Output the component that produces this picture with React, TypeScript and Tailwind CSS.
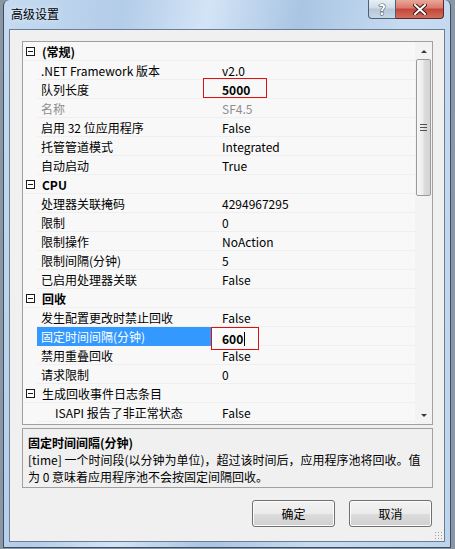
import React from "react";

type Row =
  | { kind: "cat"; name: string; bold?: boolean }
  | { kind: "prop"; name: string; value: string; disabled?: boolean; indent?: boolean; selected?: boolean; boldValue?: boolean };

const rows: Row[] = [
  { kind: "cat", name: "(常规)", bold: true },
  { kind: "prop", name: ".NET Framework 版本", value: "v2.0" },
  { kind: "prop", name: "队列长度", value: "5000", boldValue: true },
  { kind: "prop", name: "名称", value: "SF4.5", disabled: true },
  { kind: "prop", name: "启用 32 位应用程序", value: "False" },
  { kind: "prop", name: "托管管道模式", value: "Integrated" },
  { kind: "prop", name: "自动启动", value: "True" },
  { kind: "cat", name: "CPU", bold: true },
  { kind: "prop", name: "处理器关联掩码", value: "4294967295" },
  { kind: "prop", name: "限制", value: "0" },
  { kind: "prop", name: "限制操作", value: "NoAction" },
  { kind: "prop", name: "限制间隔(分钟)", value: "5" },
  { kind: "prop", name: "已启用处理器关联", value: "False" },
  { kind: "cat", name: "回收", bold: true },
  { kind: "prop", name: "发生配置更改时禁止回收", value: "False" },
  { kind: "prop", name: "固定时间间隔(分钟)", value: "600", selected: true, boldValue: true },
  { kind: "prop", name: "禁用重叠回收", value: "False" },
  { kind: "prop", name: "请求限制", value: "0" },
  { kind: "cat", name: "生成回收事件日志条目" },
  { kind: "prop", name: "ISAPI 报告了非正常状态", value: "False", indent: true },
];

function Minus() {
  return (
    <div className="w-[9px] h-[9px] border border-[#1a1a1a] bg-white flex items-center justify-center">
      <div className="w-[5px] h-px bg-[#1a1a1a]" />
    </div>
  );
}

function GridRow({ r }: { r: Row }) {
  if (r.kind === "cat") {
    return (
      <div className="flex h-[19px] items-center border-b border-[#f0f0f0]">
        <div className="w-[14px] pl-[3px] flex items-center">
          <Minus />
        </div>
        <div className={`pl-[5px] pt-[1px] whitespace-nowrap text-black ${r.bold ? "font-bold" : ""}`}>{r.name}</div>
      </div>
    );
  }
  return (
    <div className="flex h-[19px] items-stretch">
      <div className="w-[14px]" />
      <div
        className={`w-[174px] flex items-center pt-[1px] whitespace-nowrap border-b ${
          r.selected ? "bg-[#3399ff] text-white border-[#3399ff]" : "border-[#efefef]"
        } ${r.indent ? "pl-[18px]" : "pl-[4px]"} ${r.disabled ? "text-[#8e8e8e]" : r.selected ? "" : "text-black"}`}
      >
        {r.name}
      </div>
      <div className="flex-1 flex items-center pt-[1px] border-b border-[#efefef] relative">
        {r.selected ? (
          <div className="absolute left-0 top-0 w-[48px] h-[23px] border border-[#e01010] bg-[#fbfbfb] flex items-center pl-[10px] pt-[1px]">
            <span className="font-bold text-black">{r.value}</span>
            <span className="w-px h-[14px] bg-black ml-[1px]" />
          </div>
        ) : (
          <span className={`pl-[11px] ${r.disabled ? "text-[#8e8e8e]" : "text-black"} ${r.boldValue ? "font-bold" : ""}`}>
            {r.value}
          </span>
        )}
        {r.name === "队列长度" && (
          <div className="absolute left-[-8px] top-[-2px] w-[64px] h-[20px] border border-[#e01010]" />
        )}
      </div>
    </div>
  );
}

function Scrollbar() {
  return (
    <div className="w-[17px] bg-[#f3f3f3] flex flex-col items-center">
      <div className="h-[17px] flex items-center justify-center">
        <div className="w-0 h-0 border-l-[3px] border-r-[3px] border-b-[3px] border-l-transparent border-r-transparent border-b-[#3a3a3a] mt-[1px]" />
      </div>
      <div className="w-[15px] h-[137px] rounded-[2px] border border-[#9a9a9a] bg-[linear-gradient(90deg,#f6f6f6_0%,#ececec_45%,#dcdcdc_55%,#d4d4d4_100%)] flex flex-col items-center justify-center gap-[2px]">
        <div className="w-[7px] h-px bg-[#505050]" />
        <div className="w-[7px] h-px bg-[#505050]" />
        <div className="w-[7px] h-px bg-[#505050]" />
      </div>
      <div className="flex-1" />
      <div className="h-[17px] flex items-center justify-center">
        <div className="w-0 h-0 border-l-[3px] border-r-[3px] border-t-[3px] border-l-transparent border-r-transparent border-t-[#3a3a3a]" />
      </div>
    </div>
  );
}

function Button({ label }: { label: string }) {
  return (
    <div className="w-[83px] h-[27px] rounded-[3px] border border-[#707070] bg-[linear-gradient(180deg,#f2f2f2_0%,#ebebeb_50%,#dddddd_51%,#cfcfcf_100%)] shadow-[inset_0_0_0_1px_#fcfcfc] flex items-center justify-center pt-[1px] text-black">
      {label}
    </div>
  );
}

export default function App() {
  return (
    <div className="w-[455px] h-[549px] bg-[#8b96a3] font-['Noto_Sans_CJK_SC','Microsoft_YaHei',sans-serif] text-[12px] leading-none overflow-hidden">
      <div className="ml-[3px] w-[448px] h-[548px] rounded-t-[6px] border border-t-0 border-[#3c4d61] bg-[linear-gradient(100deg,#c6dbf1_0%,#b3cce8_22%,#d3e4f6_38%,#a9c5e3_55%,#c8dcf1_75%,#bcd4ed_100%)] flex flex-col px-[5px] pb-[5px] relative">
        {/* title bar */}
        <div className="h-[29px] flex items-start">
          <div className="pt-[8px] pl-[2px] text-[12px] text-black [text-shadow:0_0_6px_#e8f2fc]">高级设置</div>
          <div className="flex-1" />
          <div className="flex mr-[1px]">
            <div className="w-[28px] h-[19px] rounded-bl-[4px] border border-t-0 border-[#4f5f72] bg-[linear-gradient(180deg,#e6eef6_0%,#cfdbe8_45%,#b4c6d9_50%,#c8d7e6_100%)] flex items-center justify-center">
              <span className="text-white font-bold text-[14px] [-webkit-text-stroke:1px_#3a4450] [paint-order:stroke_fill]">?</span>
            </div>
            <div className="w-[48px] h-[19px] rounded-br-[4px] border border-t-0 border-l-0 border-[#5a2a2a] bg-[linear-gradient(180deg,#e9a899_0%,#d9786a_45%,#c4453a_50%,#d0705a_100%)] flex items-center justify-center">
              <svg width="14" height="11" viewBox="0 0 14 11">
                <path d="M2 1 L12 10 M12 1 L2 10" stroke="#3a1a1a" strokeWidth="4" strokeLinecap="square" />
                <path d="M2 1 L12 10 M12 1 L2 10" stroke="#ffffff" strokeWidth="2" strokeLinecap="square" />
              </svg>
            </div>
          </div>
        </div>
        {/* client */}
        <div className="flex-1 border border-[#6a7d93] bg-[#f0f0f0] flex flex-col pl-[12px] pr-[11px] pt-[11px] relative">
          <div className="h-[384px] border border-[#a0a0a0] bg-[#f8f8f8] flex">
            <div className="flex-1 flex flex-col">
              {rows.map((r, i) => (
                <GridRow key={i} r={r} />
              ))}
            </div>
            <Scrollbar />
          </div>
          <div className="mt-[3px] h-[60px] border border-[#a0a0a0] bg-[#f0f0f0] pl-[5px] pt-[5px] text-black whitespace-nowrap">
            <div className="font-bold h-[17px] flex items-center pt-[1px]">固定时间间隔(分钟)</div>
            <div className="h-[17px] flex items-center pt-[1px]">[time] 一个时间段(以分钟为单位)，超过该时间后，应用程序池将回收。值</div>
            <div className="h-[17px] flex items-center pt-[1px]">为 0 意味着应用程序池不会按固定间隔回收。</div>
          </div>
          <div className="mt-[12px] flex justify-end gap-[14px] pr-[1px]">
            <Button label="确定" />
            <Button label="取消" />
          </div>
          <div className="absolute right-[2px] bottom-[2px] w-[8px] h-[8px] bg-[radial-gradient(circle,#a0a0a0_0.8px,transparent_1px)] bg-[length:3px_3px]" />
        </div>
      </div>
    </div>
  );
}
